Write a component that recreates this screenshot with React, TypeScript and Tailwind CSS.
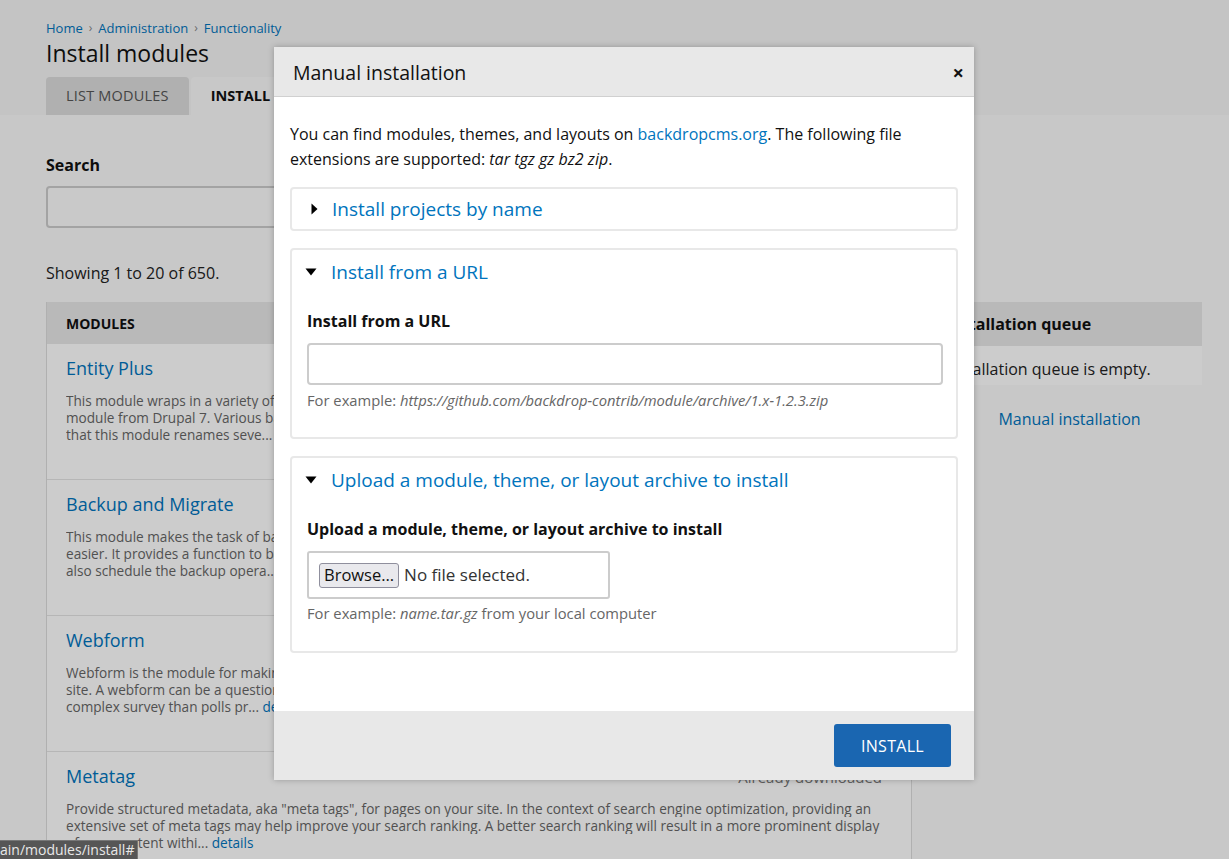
import React from "react";

const font = { fontFamily: '"Open Sans", "Noto Sans", sans-serif' };

function Caret({ open }: { open: boolean }) {
  return open ? (
    <svg width="12" height="8" viewBox="0 0 12 8" className="mr-[14px] shrink-0">
      <path d="M0.5 0.5 L11.5 0.5 L6 7.5 Z" fill="#000" />
    </svg>
  ) : (
    <svg width="7" height="12" viewBox="0 0 7 12" className="mr-[14px] ml-[2px] shrink-0">
      <path d="M0.5 0.5 L6.5 6 L0.5 11.5 Z" fill="#000" />
    </svg>
  );
}

function ModuleRow({ title, lines, showStatus, last }: { title: string; lines: React.ReactNode[]; showStatus?: boolean; last?: boolean }) {
  return (
    <div className={`bg-white px-[19px] pt-[13px] h-[136px] ${last ? "" : "border-b border-[#e4e4e4]"}`}>
      <div className="flex justify-between items-center h-[22px]">
        <div className="text-[18px] leading-[22px] text-[#0074bd]">{title}</div>
        {showStatus && <div className="text-[15px] text-[#777] pr-[10px] pt-[3px]">Already downloaded</div>}
      </div>
      <div className="mt-[13px] text-[13.6px] leading-[17px] text-[#666]">
        {lines.map((l, i) => (
          <div key={i} className="whitespace-nowrap overflow-hidden">
            {l}
          </div>
        ))}
      </div>
    </div>
  );
}

export default function App() {
  return (
    <div className="relative w-[1229px] h-[859px] overflow-hidden bg-[#fafafa]" style={font}>
      {/* Header */}
      <div className="bg-[#f5f5f5] px-[46px] pt-[20px]">
        <div className="flex items-center text-[13px] leading-[16px] text-[#0074bd]">
          <span>Home</span>
          <span className="mx-[6px] text-[#888] text-[12px]">›</span>
          <span>Administration</span>
          <span className="mx-[6px] text-[#888] text-[12px]">›</span>
          <span>Functionality</span>
        </div>
        <h1 className="text-[23px] leading-[30px] text-[#111] mt-[2px]">Install modules</h1>
        <div className="flex mt-[9px] h-[38px]">
          <div className="bg-[#dcdcdc] rounded-t-[4px] px-[20px] flex items-center text-[14.5px] text-[#555] tracking-[0.2px]">
            LIST MODULES
          </div>
          <div className="bg-[#fafafa] rounded-t-[4px] ml-[2px] px-[20px] flex items-center text-[14.5px] font-bold text-[#111] w-[200px]">
            INSTALL
          </div>
        </div>
      </div>

      {/* Main */}
      <div className="pl-[46px] pr-[27px] pt-[39px]">
        <div className="text-[16px] font-bold text-[#111] leading-[22px]">Search</div>
        <div className="mt-[10px] h-[42px] w-[866px] border-2 border-[#ccc] rounded-[4px] bg-[#fcfcfc]" />
        <div className="mt-[34px] text-[16px] text-[#222] leading-[22px]">Showing 1 to 20 of 650.</div>
        <div className="flex mt-[18px] items-start">
          <div className="w-[866px] shrink-0 border-x border-[#ddd]">
            <div className="bg-[#e8e8e8] h-[42px] flex items-center px-[19px] text-[14px] font-bold text-[#111]">MODULES</div>
            <ModuleRow
              title="Entity Plus"
              lines={[
                "This module wraps in a variety of entity-related APIs and improvements that were provided by the contributed Entity API",
                "module from Drupal 7. Various backdrop core entity functions are extended or replaced. Note",
                "that this module renames seve... details",
              ]}
            />
            <ModuleRow
              title="Backup and Migrate"
              lines={[
                "This module makes the task of backing up your Backdrop database, code, and files or migrating data from one site to another",
                "easier. It provides a function to backup the entire database to file or download, and to restore from a previous backup. You can",
                "also schedule the backup opera... details",
              ]}
            />
            <ModuleRow
              title="Webform"
              lines={[
                "Webform is the module for making forms and surveys in Backdrop. After a submission customization, a notification may be sent to users on your",
                "site. A webform can be a questionnaire, contact or request form. Webform is more suited for creating a",
                <>
                  complex survey than polls pr... <span className="text-[#0074bd]">details</span>
                </>,
              ]}
            />
            <ModuleRow
              title="Metatag"
              last
              showStatus
              lines={[
                'Provide structured metadata, aka "meta tags", for pages on your site. In the context of search engine optimization, providing an',
                "extensive set of meta tags may help improve your search ranking. A better search ranking will result in a more prominent display",
                <>
                  of your content withi... <span className="text-[#0074bd]">details</span>
                </>,
              ]}
            />
          </div>
          <div className="ml-[13px] flex-1">
            <div className="bg-[#e8e8e8] h-[44px] flex items-center px-[20px] text-[16px] font-bold text-[#111]">Installation queue</div>
            <div className="bg-white h-[39px] flex items-center pt-[6px] px-[20px] text-[16px] text-[#222]">Installation queue is empty.</div>
            <div className="mt-[22px] text-center text-[16px] text-[#0074bd] pl-[12px]">Manual installation</div>
          </div>
        </div>
      </div>

      {/* Overlay */}
      <div className="absolute inset-0 bg-black/20" />

      {/* Modal */}
      <div className="absolute left-[274px] top-[47px] w-[700px] h-[733px] bg-white flex flex-col shadow-[0_0_6px_rgba(0,0,0,0.25)]">
        <div className="h-[50px] bg-[#e8e8e8] border-b border-[#d0d0d0] flex items-center justify-between pl-[19px] pr-[10px] pt-[3px]">
          <span className="text-[19.5px] text-[#111]">Manual installation</span>
          <span className="text-[20px] font-bold text-[#111] leading-none">×</span>
        </div>
        <div className="flex-1 px-[16px] pt-[25px]">
          <p className="text-[16px] leading-[25px] text-[#111]">
            You can find modules, themes, and layouts on <span className="text-[#0074bd]">backdropcms.org</span>. The following file
            extensions are supported: <em>tar tgz gz bz2 zip</em>.
          </p>
          <div className="mt-[15px] h-[44px] border-2 border-[#e8e8e8] rounded-[4px] flex items-center pl-[17px]">
            <Caret open={false} />
            <span className="text-[19px] text-[#0074bd] leading-[24px]">Install projects by name</span>
          </div>
          <div className="mt-[17px] h-[191px] border-2 border-[#e8e8e8] rounded-[4px] pl-[13px] pr-[13px] pt-[10px]">
            <div className="flex items-center h-[24px]">
              <Caret open />
              <span className="text-[19px] text-[#0074bd] leading-[24px]">Install from a URL</span>
            </div>
            <div className="mt-[27px] pl-[2px] text-[16px] font-bold text-[#111] leading-[20px]">Install from a URL</div>
            <div className="mt-[12px] ml-[2px] h-[42px] border-2 border-[#ccc] rounded-[4px]" />
            <div className="mt-[6px] pl-[2px] text-[14.75px] text-[#666] leading-[18px]">
              For example: <em>https://github.com/backdrop-contrib/module/archive/1.x-1.2.3.zip</em>
            </div>
          </div>
          <div className="mt-[17px] h-[197px] border-2 border-[#e8e8e8] rounded-[4px] pl-[13px] pr-[13px] pt-[10px]">
            <div className="flex items-center h-[24px]">
              <Caret open />
              <span className="text-[19px] text-[#0074bd] leading-[24px]">Upload a module, theme, or layout archive to install</span>
            </div>
            <div className="mt-[27px] pl-[2px] text-[16px] font-bold text-[#111] leading-[20px]">Upload a module, theme, or layout archive to install</div>
            <div className="mt-[12px] ml-[2px] h-[48px] w-[303px] border-2 border-[#ccc] rounded-[3px] flex items-center pl-[10px]">
              <span className="h-[25px] px-[4px] flex items-center bg-[#e9e9ed] border border-[#8f8f9d] rounded-[3px] text-[16.5px] text-[#111]">
                Browse…
              </span>
              <span className="ml-[5px] text-[17px] text-[#333]">No file selected.</span>
            </div>
            <div className="mt-[5px] pl-[2px] text-[14.75px] text-[#666] leading-[18px]">
              For example: <em>name.tar.gz</em> from your local computer
            </div>
          </div>
        </div>
        <div className="h-[69px] bg-[#e8e8e8] flex items-center justify-end pr-[23px]">
          <div className="w-[117px] h-[43px] bg-[#1a66b1] rounded-[3px] flex items-center justify-center text-white text-[16px] tracking-[0.3px]">
            INSTALL
          </div>
        </div>
      </div>

      {/* Browser status bar */}
      <div className="absolute left-0 bottom-0 h-[19px] w-[138px] bg-[#565656] border-t border-r border-[#777] flex items-center text-[14px] text-[#e8e8e8] leading-none whitespace-nowrap overflow-hidden">
        ain/modules/install#
      </div>
    </div>
  );
}
